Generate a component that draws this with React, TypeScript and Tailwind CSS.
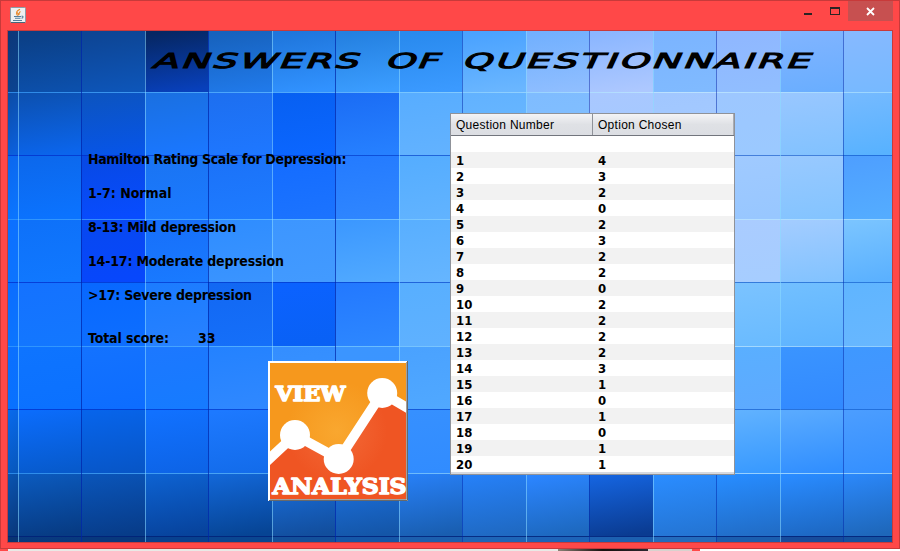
const xs = [8, 18, 81, 145, 208, 272, 335, 399, 462, 526, 589, 653, 716, 780, 843, 892];
const ys = [31, 92, 155, 219, 282, 346, 409, 473, 536, 542];

// Two colours per tile: top and bottom.
const tiles: string[][] = [
  ['0c387a,0b4390', '0b3f85,0c50ac', '0d4594,0d55b8', '062763,0840bb', '1762bd,2079e9', '1f76dc,3192ff', '2480e0,3b9dff', '298aee,3b9aff', '4aa2ff,6ab6ff', '72b0fe,8fbeff', '8bb6ff,adc8ff', '7bb4ff,80baff', '8fb7ff,91beff', '80b4ff,6aaeff', '86b9ff,77b9ff'],
  ['0b4da8,0b60dd', '0c51b2,0b65ec', '0c54c0,0755e8', '1a70e2,1a77ff', '1d6ff0,1e77ff', '0760f2,0b66ff', '1b6df5,2680ff', '58adff,62b2ff', '62b2ff,6bb9ff', '7fbcff,82c0ff', 'a9c8ff,a3caff', 'a1c7ff,a5cbff', '9dc7ff,9bc9ff', '98c7ff,82c2ff', '75baff,58b2ff'],
  ['0b68ee,0b75ff', '0c68ec,0b73ff', '0749e4,084cff', '1a74f2,1b7aff', '1b72f8,1e7bff', '146cff,1b73ff', '247bff,2f86ff', '55adff,61b3ff', '68b2ff,70baff', '7bbbff,83c0ff', 'a1c9ff,a5cbff', '9bc8ff,9dccff', 'a0caff,98c7ff', '98c9ff,84c4ff', '4e9fff,54acff'],
  ['0c70ff,0c74ff', '0e71f9,1078ff', '0748f0,0747fc', '176ffa,197aff', '2f8dff,3a94ff', '3d96ff,429aff', '3c98ff,50a9ff', '59afff,65b5ff', '60b2ff,77bfff', '94c5ff,98c9ff', 'a5cbff,a2c7ff', 'a8caff,a3c8ff', 'aaccff,a6cdff', 'a2ccff,83c3ff', '7ac4ff,5bb1ff'],
  ['0b6dff,0b75ff', '1472ff,1377ff', '0868ff,0d6eff', '1c7cff,2781ff', '1268f3,156ff9', '0b62ff,0961f5', '2379ff,2d87ff', '58afff,5fb1ff', '5caeff,60b1ff', '69b6ff,70bbff', '76c0ff,72bdff', '79c2ff,6abaff', '7bc3ff,6abbff', '71bfff,5fb4ff', '60b5ff,67b7ff'],
  ['0b70ff,0871ff', '0e74ff,0b71ff', '1372ff,0d6dff', '1c78ff,167bff', '2482ff,2f88ff', '348eff,3993ff', '3b95ff,3c95ff', '4aa2ff,50a8ff', '489dff,55a7ff', '5bafff,61b2ff', '62b3ff,5bb0ff', '60b3ff,57acff', '5aafff,5daaff', '3a94ff,328aff', '3f98ff,4395ff'],
  ['0869ea,0758be', '0b6cfb,075acc', '0764ea,0756c8', '1171ff,0d64e7', '1d79ff,136ceb', '2380ff,2382fa', '2b8cff,2584ff', '3690ff,318cff', '398fff,3595ff', '459bff,3b95ff', '4ba0ff,3895ff', '51a5ff,3c96ff', '61b2ff,399aff', '59aaff,318fff', '4b9dff,3590ff'],
  ['0953af,09397d', '0b59bc,073b83', '0a54b8,073c89', '0d61d0,07439c', '1266d6,064494', '1a70df,124e9d', '1d72e2,1456a8', '277ff5,195eb0', '2680f7,1f69c2', '2b85ff,1d68be', '1564df,0a3b91', '2a8cff,2475d4', '278cff,216dc7', '298bff,1d68c3', '2b87f8,1e67ba'],
  ['093472,093472', '093a7f,08397d', '08387d,08387d', '08418f,08418f', '0a4691,0a4691', '13509b,13509b', '1557a8,1557a8', '1c5fae,1c5fae', '1e65b7,1e65b7', '1d63b8,1d63b8', '1c60b0,1c60b0', '246cbd,246cbd', '1b5eaf,1b5eaf', '174c9c,174c9c', '1552a0,1552a0'],
];

function Backdrop() {
  return (
    <svg className="absolute inset-0" width="884" height="511" viewBox="8 31 884 511" shapeRendering="crispEdges" aria-hidden="true">
      <defs>
        <linearGradient id="lightLine" gradientUnits="userSpaceOnUse" x1="8" y1="0" x2="892" y2="0">
          <stop offset="0" stopColor="#39a0ff" stopOpacity=".7" />
          <stop offset=".35" stopColor="#6cc4ff" stopOpacity=".75" />
          <stop offset=".75" stopColor="#c5eaff" stopOpacity=".75" />
          <stop offset="1" stopColor="#a4dcff" stopOpacity=".8" />
        </linearGradient>
        <linearGradient id="darkLine" gradientUnits="userSpaceOnUse" x1="8" y1="0" x2="892" y2="0">
          <stop offset="0" stopColor="#0028c8" stopOpacity=".7" />
          <stop offset="1" stopColor="#004cc0" stopOpacity=".55" />
        </linearGradient>
        {tiles.flatMap((row, r) =>
          row.map((pair, c) => {
            const [a, b] = pair.split(',');
            return (
              <linearGradient key={`${r}-${c}`} id={`t${r}-${c}`} x1="0.42" y1="0" x2="0.58" y2="1">
                <stop offset="0" stopColor={`#${a}`} />
                <stop offset="1" stopColor={`#${b}`} />
              </linearGradient>
            );
          }),
        )}
      </defs>
      {tiles.flatMap((row, r) =>
        row.map((_, c) => (
          <rect key={`${r}-${c}`} x={xs[c]} y={ys[r]} width={xs[c + 1] - xs[c]} height={ys[r + 1] - ys[r]} fill={`url(#t${r}-${c})`} />
        )),
      )}
      {ys.slice(1, -1).map((y, i) =>
        y === 536 ? (
          <rect key={y} x="8" y={y} width="884" height="1" fill="#001f78" fillOpacity=".8" />
        ) : (
          <rect key={y} x="8" y={y} width="884" height="1" fill={i % 2 === 0 ? 'url(#lightLine)' : 'url(#darkLine)'} />
        ),
      )}
      {xs.slice(1, -1).map((x, i) => (
        <rect key={x} x={x} y="31" width="1" height="511" fill={i % 2 === 0 ? '#8edcff' : '#0024a8'} fillOpacity={i % 2 === 0 ? 0.55 : x > 420 ? 0.5 : 0.7} />
      ))}
    </svg>
  );
}

function JavaIcon() {
  return (
    <svg width="16" height="16" viewBox="0 0 16 16" aria-hidden="true">
      <rect x=".5" y=".5" width="15" height="15" rx="1" fill="#eef0f0" stroke="#8a9da8" />
      <path d="M1 15.5h14" stroke="#46697c" />
      <path d="M10 2.2C6.5 4 6 5.200 8 6.500C9 7.400 8.500 8 7.500 8.700M10.500 4.600C8.500 5.600 9.500 6.500 9 7.800M6.800 5C5.800 6.500 7.200 7 7 8.300" fill="none" stroke="#e8892b" strokeWidth="1.100" />
      <path d="M4 9.500h7M5 11.300h5.500M3 13.500h9M11.500 9.300c2-.6 2 1.600 0 2" fill="none" stroke="#557f9c" strokeWidth="1.100" />
    </svg>
  );
}

function AnalysisButton() {
  return (
    <button className="ml-[180px] mt-[14px] block h-[140px] w-[140px]" aria-label="View analysis">
      <svg width="140" height="140" viewBox="0 0 140 140">
        <defs>
          <radialGradient id="amber" gradientUnits="userSpaceOnUse" cx="69" cy="70" r="50">
            <stop offset="0" stopColor="#f9a72f" />
            <stop offset="1" stopColor="#f6981d" />
          </radialGradient>
          <radialGradient id="rust" gradientUnits="userSpaceOnUse" cx="69" cy="70" r="50">
            <stop offset="0" stopColor="#f36a38" />
            <stop offset="1" stopColor="#ef5523" />
          </radialGradient>
          <clipPath id="face">
            <rect x="2" y="2" width="136" height="136" />
          </clipPath>
        </defs>
        <rect width="140" height="140" fill="#fff" />
        <path d="M139.500 0V139.500H1" fill="none" stroke="#696969" />
        <path d="M138.500 1V138.500H2" fill="none" stroke="#a0a0a0" />
        <g clipPath="url(#face)">
          <rect x="2" y="2" width="136" height="136" fill="url(#amber)" />
          <path d="M0 99L27 74L71 98L114 32L140 47V138H0Z" fill="url(#rust)" />
          <path d="M-2 101L27 74L71 98L114 32L142 48.500" fill="none" stroke="#fff" strokeWidth="9.800" />
          <circle cx="27" cy="74" r="15" fill="#fff" />
          <circle cx="70.700" cy="98" r="15" fill="#fff" />
          <circle cx="114.200" cy="32" r="15" fill="#fff" />
          <g fill="#fff" stroke="#fff" strokeWidth="1.400" strokeLinejoin="round" fontFamily="'DejaVu Serif', 'Liberation Serif', serif" fontWeight="700">
            <text x="7.500" y="40" fontSize="21" textLength="70" lengthAdjust="spacingAndGlyphs">VIEW</text>
            <text x="4.500" y="132.500" fontSize="21.500" textLength="134" lengthAdjust="spacingAndGlyphs">ANALYSIS</text>
          </g>
        </g>
      </svg>
    </button>
  );
}

const answers = [4, 3, 2, 0, 2, 3, 2, 2, 0, 2, 2, 2, 2, 3, 1, 0, 1, 0, 1, 1];

function AnswerTable() {
  return (
    <div className="flex h-[362px] w-[285px] flex-col border border-[#8f9299] bg-[#d6d9df]">
      <div className="flex h-[22px] border-b border-[#72757d] bg-linear-to-b from-[#f4f4f6] via-[#dfe1e5] to-[#dcdee3] font-['Liberation_Sans',sans-serif] text-[12px] font-normal leading-[23px] tracking-[0.28px]">
        <div className="w-[142px] border-r border-[#8f9299] pl-[5px]">Question Number</div>
        <div className="flex-1 border-r border-[#a9acb3] pl-[5px]">Option Chosen</div>
      </div>
      <div className="h-4 bg-white" />
      {answers.map((answer, i) => (
        <div key={i} className={`flex h-4 text-[13px] leading-[18px] ${i % 2 === 0 ? 'bg-[#f2f2f2]' : 'bg-white'}`}>
          <span className="w-[142px] pl-[5px]">{i + 1}</span>
          <span className="pl-[5px]">{answer}</span>
        </div>
      ))}
    </div>
  );
}

export default function App() {
  return (
    <div className="h-[551px] w-[900px] overflow-hidden bg-white font-['DejaVu_Sans_Condensed','DejaVu_Sans',sans-serif] font-bold text-black [font-stretch:condensed]">
      <div className="flex h-[549px] flex-col border border-[#c83a3a] bg-[#ff4848] px-[6px] pb-[5px]">
        <header className="flex h-[29px] items-start">
          <div className="ml-[3px] mt-[6px]">
            <JavaIcon />
          </div>
          <div className="ml-auto flex">
            <svg width="44" height="20" viewBox="0 0 44 20" shapeRendering="crispEdges" aria-hidden="true">
              <rect x="0" y="12" width="8" height="2" fill="#2b2424" />
              <path d="M26 6h10v8H26ZM27 8v5h8V8Z" fill="#2b2424" fillRule="evenodd" />
            </svg>
            <div className="flex h-5 w-[45px] items-center justify-center bg-[#c75050]">
              <svg width="9" height="9" viewBox="0 0 9 9" aria-hidden="true">
                <path d="M1 1L8 8M8 1L1 8" stroke="#fff" strokeWidth="1.800" />
              </svg>
            </div>
          </div>
        </header>
        <main className="relative h-[513px] w-[886px] border border-[#c83a3a]">
          <Backdrop />
          <div className="relative">
            <h1 className="flex h-[82px] pl-[141px] pt-[18px] font-['DejaVu_Sans',sans-serif] text-[20.5px] font-normal leading-[24px] [-webkit-text-stroke:1px_black] [font-stretch:normal]">
              <span className="w-[233px]"><span className="inline-block origin-bottom-left scale-x-[1.85] -skew-x-[14deg] tracking-[1.4px]">ANSWERS</span></span>
              <span className="w-[77px]"><span className="inline-block origin-bottom-left scale-x-[1.85] -skew-x-[14deg] tracking-[0.8px]">OF</span></span>
              <span><span className="inline-block origin-bottom-left scale-x-[1.85] -skew-x-[14deg] tracking-[1.5px]">QUESTIONNAIRE</span></span>
            </h1>
            <div className="flex">
              <section className="w-[442px] pl-[80px] pt-[37px] text-[14px] leading-[18px]">
                <div className="flex flex-col gap-4 whitespace-nowrap">
                  <p className="tracking-[-0.36px]">Hamilton Rating Scale for Depression:</p>
                  <p>1-7: Normal</p>
                  <p className="tracking-[-0.28px]">8-13: Mild depression</p>
                  <p className="tracking-[-0.18px]">14-17: Moderate depression</p>
                  <p className="tracking-[-0.25px]">&gt;17: Severe depression</p>
                </div>
                <p className="mt-[25px] flex">
                  <span className="w-[110px] tracking-[-0.1px]">Total score:</span>
                  <span>33</span>
                </p>
                <AnalysisButton />
              </section>
              <AnswerTable />
            </div>
          </div>
        </main>
      </div>
      <div className="flex h-[2px]">
        <div className="w-2 bg-[#ff4848]" />
        <div className="w-[550px] bg-[#e9e9e6]" />
        <div className="w-[90px] bg-linear-to-r from-[#8c8377] via-[#17110f] to-[#2b2830]" />
        <div className="w-[44px] bg-[#d8d2ce]" />
        <div className="w-2 bg-[#ff4848]" />
      </div>
    </div>
  );
}
